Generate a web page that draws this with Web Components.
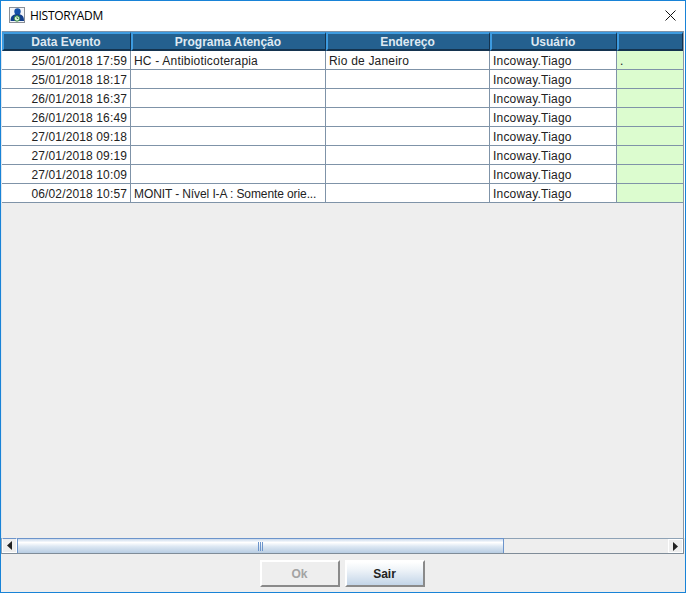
<!DOCTYPE html>
<html>
<head>
<meta charset="utf-8">
<title>HISTORYADM</title>
<style>
html, body { margin: 0; padding: 0; height: 100%; background: #eeeeee; }
</style>
</head>
<body>
<history-window>
    <history-table></history-table>
    <history-scrollbar></history-scrollbar>
    <history-buttons></history-buttons>
</history-window>
<script>
const COLUMNS = "129px 195px 164px 127px 66px";

const ROWS = [
    ["25/01/2018 17:59", "HC - Antibioticoterapia", "Rio de Janeiro", "Incoway.Tiago", "."],
    ["25/01/2018 18:17", "", "", "Incoway.Tiago", ""],
    ["26/01/2018 16:37", "", "", "Incoway.Tiago", ""],
    ["26/01/2018 16:49", "", "", "Incoway.Tiago", ""],
    ["27/01/2018 09:18", "", "", "Incoway.Tiago", ""],
    ["27/01/2018 09:19", "", "", "Incoway.Tiago", ""],
    ["27/01/2018 10:09", "", "", "Incoway.Tiago", ""],
    ["06/02/2018 10:57", "MONIT - Nível I-A : Somente orie...", "", "Incoway.Tiago", ""],
];

class HistoryWindow extends HTMLElement {
    constructor() {
        super();
        this.attachShadow({ mode: "open" });
    }

    connectedCallback() {
        this.shadowRoot.innerHTML = /* html */`
        <style>
        :host {
            display: flex;
            flex-direction: column;
            box-sizing: border-box;
            width: 686px;
            height: 593px;
            border: 1px solid #1883d7;
            background: #eeeeee;
            overflow: hidden;
        }
        .title {
            display: flex;
            align-items: center;
            box-sizing: border-box;
            height: 30px;
            flex: none;
            background: #fff;
            padding: 0 0 2px 8px;
            gap: 5px;
            font: 12px "Open Sans", sans-serif;
            letter-spacing: -0.3px;
            color: #000;
        }
        .title span { flex: 1; }
        .close { width: 29px; display: flex; align-items: center; justify-content: center; }
        svg { display: block; }
        </style>
        <div class="title">
            <svg width="16" height="16" viewBox="0 0 16 16">
                <rect x="0.5" y="0.5" width="15" height="15" fill="#f2f5fa" stroke="#8a8f96"/>
                <circle cx="8.5" cy="4.4" r="3.2" fill="#1450a8"/>
                <path d="M1.5 14c0-5 2.5-7 7-7s6.5 2 6.5 7z" fill="#123f8c"/>
                <circle cx="8" cy="11.5" r="2.7" fill="#e4f4e0" stroke="#2f8a3c"/>
                <path d="M8 10v1.5h1.3" fill="none" stroke="#1f6f2c" stroke-width="0.8"/>
            </svg>
            <span>HISTORYADM</span>
            <div class="close">
                <svg width="11" height="11" viewBox="0 0 11 11">
                    <path d="M0.5 0.5L10.5 10.5M10.5 0.5L0.5 10.5" stroke="#111" stroke-width="1" fill="none"/>
                </svg>
            </div>
        </div>
        <slot></slot>`;
    }
}

class HistoryTable extends HTMLElement {
    constructor() {
        super();
        this.attachShadow({ mode: "open" });
    }

    connectedCallback() {
        const headers = ["Data Evento", "Programa Atenção", "Endereço", "Usuário", ""];
        const head = headers.map(h => `<div class="th">${h}</div>`).join("");
        const body = ROWS.map(row => row.map((text, i) => {
            const tight = text.startsWith("MONIT") ? " tight" : "";
            return `<div class="td c${i}${tight}">${text}</div>`;
        }).join("")).join("");
        this.shadowRoot.innerHTML = /* html */`
        <style>
        :host {
            display: block;
            flex: 1;
            min-height: 0;
            font: 12px "Liberation Sans", Arial, sans-serif;
            border-left: 1px solid #dfe6ee;
            border-right: 1px solid #fff;
        }
        .pane {
            box-sizing: border-box;
            height: 100%;
            border-top: 1px solid #7f93a8;
            border-right: 1px solid #8a97a5;
        }
        .head, .rows {
            display: grid;
            grid-template-columns: ${COLUMNS};
        }
        .th {
            box-sizing: border-box;
            height: 19px;
            line-height: 17px;
            padding-right: 2px;
            text-align: center;
            font-weight: bold;
            color: #dfe9f2;
            background: #24608f;
            border-top: 2px solid #3d9be0;
            border-left: 2px solid #3d9be0;
            border-bottom: 2px solid #14334f;
            border-right: 1px solid #14334f;
        }
        .rows { background: #fff; }
        .td {
            box-sizing: border-box;
            height: 19px;
            line-height: 20px;
            padding: 0 3px 0 3px;
            color: #222;
            letter-spacing: 0.2px;
            white-space: nowrap;
            overflow: hidden;
            background: #fff;
            border-right: 1px solid #7f93a8;
            border-bottom: 1px solid #7f93a8;
        }
        .c0 { text-align: right; letter-spacing: 0.13px; }
        .c4 { background: #dcfccf; border-right: 0; }
        .tight { letter-spacing: -0.1px; }
        </style>
        <div class="pane">
            <div class="head">${head}</div>
            <div class="rows">${body}</div>
        </div>`;
    }
}

class HistoryScrollbar extends HTMLElement {
    constructor() {
        super();
        this.attachShadow({ mode: "open" });
    }

    connectedCallback() {
        this.shadowRoot.innerHTML = /* html */`
        <style>
        :host {
            display: flex;
            flex: none;
            height: 16px;
            box-sizing: border-box;
            border-top: 1px solid #8ea2b6;
            border-bottom: 1px solid #7f8c98;
            border-left: 1px solid #8ea2b6;
            border-right: 1px solid #7f8c98;
            background: #eeeeee;
            margin-right: 1px;
        }
        .arrow {
            width: 15px;
            flex: none;
            display: flex;
            align-items: center;
            justify-content: center;
            background: #eeeeee;
            border: 1px solid #fff;
            box-sizing: border-box;
        }
        .arrow.left { margin-top: -1px; border-top-color: #6c94cb; }
        .thumb {
            width: 487px;
            flex: none;
            box-sizing: border-box;
            margin-top: -1px;
            border: 1px solid #6c94cb;
            border-bottom: 0;
            background: linear-gradient(#c9d9ec, #fff 25%, #dbe6f2 55%, #b8cde3);
            display: flex;
            align-items: center;
            justify-content: center;
            gap: 1px;
        }
        .thumb i { display: block; width: 1px; height: 9px; background: #6c94cb; }
        .track { flex: 1; }
        </style>
        <div class="arrow left">
            <svg width="5" height="9" viewBox="0 0 5 9"><path d="M5 0V9L0 4.5z" fill="#222"/></svg>
        </div>
        <div class="thumb"><i></i><i></i><i></i></div>
        <div class="track"></div>
        <div class="arrow">
            <svg width="5" height="9" viewBox="0 0 5 9"><path d="M0 0V9L5 4.5z" fill="#222"/></svg>
        </div>`;
    }
}

class HistoryButtons extends HTMLElement {
    constructor() {
        super();
        this.attachShadow({ mode: "open" });
    }

    connectedCallback() {
        this.shadowRoot.innerHTML = /* html */`
        <style>
        :host {
            display: flex;
            flex: none;
            justify-content: center;
            gap: 5px;
            height: 38px;
            box-sizing: border-box;
            padding: 6px 2px 0 0;
            font: bold 12px "Liberation Sans", Arial, sans-serif;
        }
        .btn {
            box-sizing: border-box;
            width: 80px;
            height: 27px;
            line-height: 25px;
            text-align: center;
            border: 2px solid #fff;
            border-right-color: #8a8a8a;
            border-bottom-color: #8a8a8a;
            color: #222;
            background: linear-gradient(#fff, #eef3f8 35%, #c3d5e8);
        }
        .btn.off { background: #eeeeee; color: #a3a3a3; }
        </style>
        <div class="btn off">Ok</div>
        <div class="btn">Sair</div>`;
    }
}

customElements.define("history-window", HistoryWindow);
customElements.define("history-table", HistoryTable);
customElements.define("history-scrollbar", HistoryScrollbar);
customElements.define("history-buttons", HistoryButtons);
</script>
</body>
</html>
